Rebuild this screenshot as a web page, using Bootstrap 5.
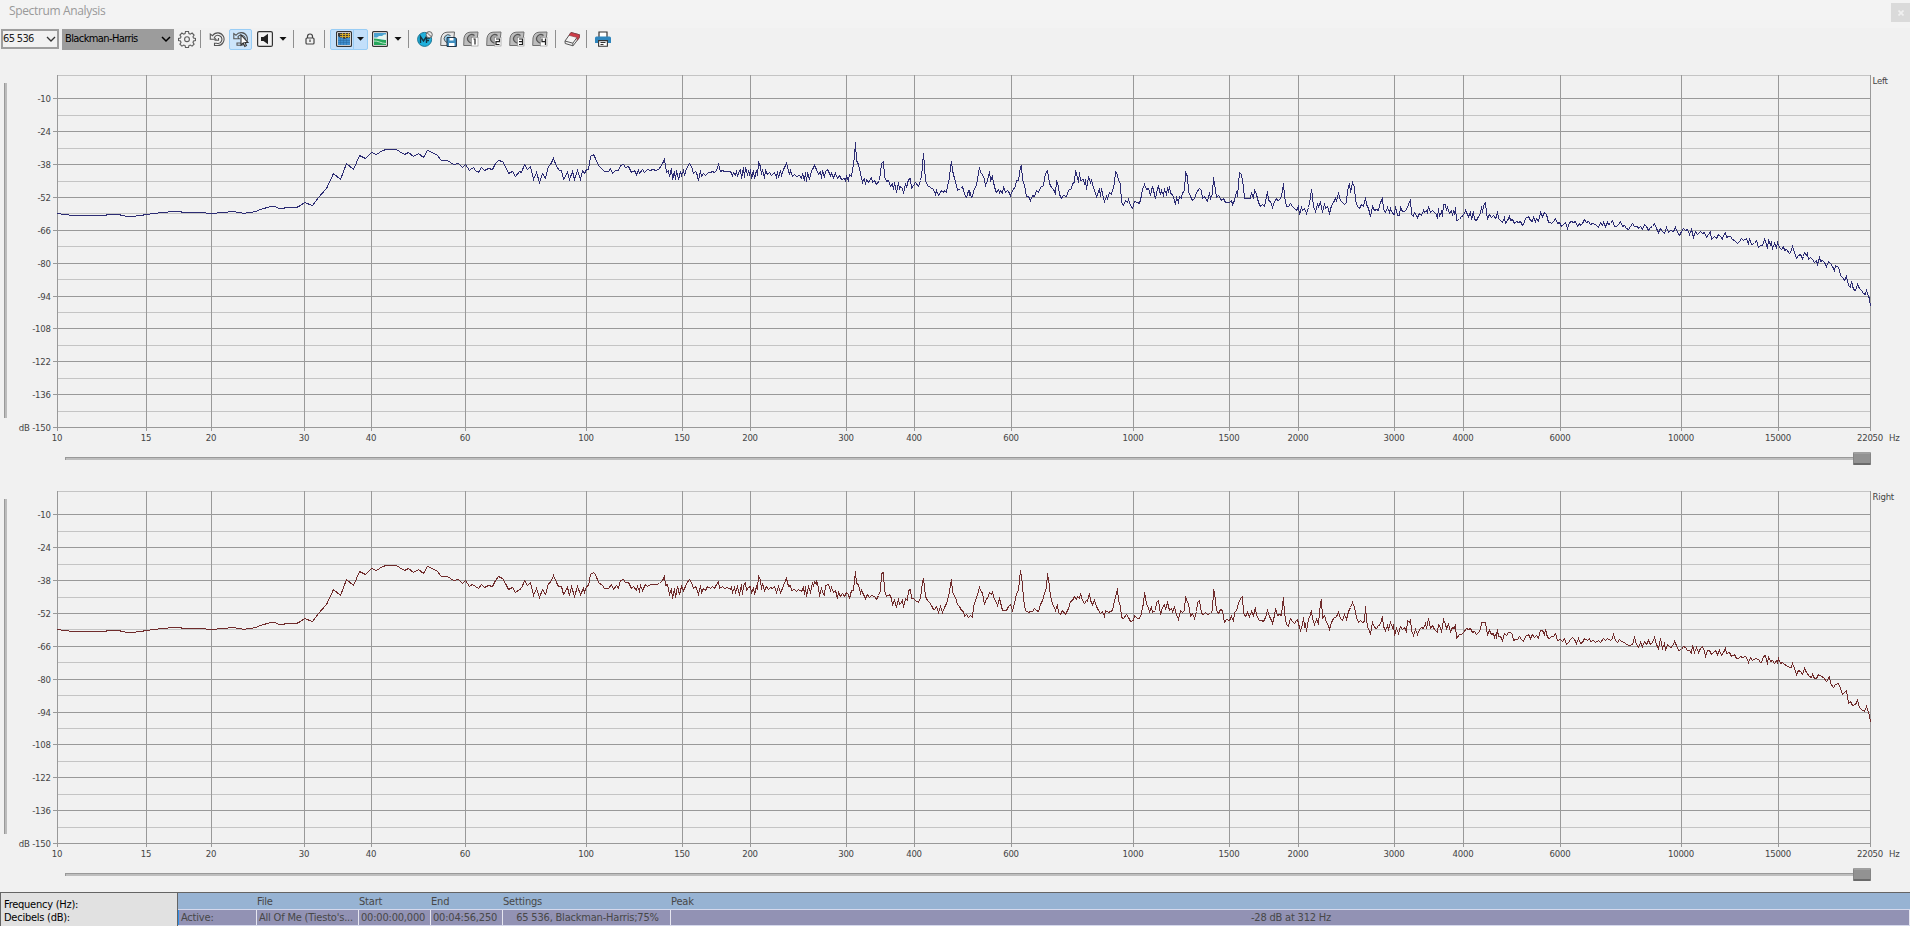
<!DOCTYPE html>
<html lang="en">
<head>
    <meta charset="UTF-8">
    <meta name="viewport" content="width=device-width, initial-scale=1">
    <title>Spectrum Analysis</title>
    <link href="https://cdn.jsdelivr.net/npm/bootstrap@5.3.0/dist/css/bootstrap.min.css" rel="stylesheet">
    <style>
        body {
            background-color: #f1f1f1;
            font-family: "DejaVu Sans Condensed", "DejaVu Sans", sans-serif;
            font-size: 11px;
            line-height: 14px;
            color: #222;
            height: 926px;
            overflow: hidden;
        }
        .titlebar {
            height: 28px;
            background-color: #f3f3f3;
            font-family: "Open Sans", sans-serif;
            font-size: 12px;
            color: #999;
            padding-left: 9px;
        }
        .title-text {
            line-height: 22px;
            letter-spacing: -0.35px;
        }
        .close-box {
            width: 19px;
            height: 19px;
            margin-top: 3px;
            background-color: #dadada;
        }
        .toolbar {
            height: 22px;
            padding-left: 1px;
        }
        .toolbar svg {
            flex: none;
            display: block;
        }
        .combo-size {
            width: 58px;
            height: 20px;
            border: 2px solid #9e9e9e;
            padding: 0 1px 0 0;
            letter-spacing: -0.65px;
            margin-right: 3px;
        }
        .combo-window {
            width: 112px;
            height: 21px;
            background-color: #9c9c9c;
            padding: 0 3px;
            color: #000;
            letter-spacing: -0.6px;
            margin-right: 4px;
        }
        .tool-sep {
            width: 1px;
            height: 18px;
            background-color: #8f8f8f;
        }
        .sep-gear { margin: 0 8px 0 4px; }
        .sep-speaker { margin: 0 10px 0 0; }
        .sep-lock { margin: 0 5px 0 8px; }
        .sep-view { margin: 0 8px 0 0; }
        .sep-slots { margin: 0 8px 0 6px; }
        .sep-eraser { margin: 0 8px 0 5px; }
        .tool-on {
            height: 21px;
            background-color: #cce5fb;
            border: 1px solid #99cdf5;
            border-radius: 2px;
        }
        .tool-pointer {
            width: 23px;
            margin: 0 4px 0 4px;
        }
        .tool-split {
            width: 38px;
            padding-left: 5px;
            background-color: #c2dffa;
        }
        .split-line {
            width: 1px;
            height: 19px;
            background-color: #99cdf5;
            margin-left: 1px;
        }
        .icon-second { margin-left: 4px; }
        .icon-slot { margin-left: 6px; }
        .icon-save { margin-left: 7px; }
        .channel {
            height: 416px;
        }
        .v-rail {
            width: 3px;
            height: 335px;
            margin: 33px 0 0 4px;
            background-color: #bcbcbc;
            border-left: 1px solid #999;
        }
        .h-row {
            height: 16px;
            padding-left: 65px;
        }
        .h-rail {
            width: 1788px;
            height: 3px;
            margin-top: 7px;
            background-color: #bebebe;
            border-top: 1px solid #999;
            border-left: 1px solid #999;
        }
        .h-thumb {
            width: 18px;
            height: 13px;
            margin-top: 2px;
            background-color: #929292;
            border: 1px solid #848484;
            border-top: 2px solid #a0a0a0;
            border-bottom: 2px solid #6a6a6a;
            border-radius: 1px;
        }
        .axis-label {
            font-size: 9.5px;
            fill: #444;
            letter-spacing: -0.2px;
        }
        .status {
            height: 34px;
            margin-top: 10px;
            border-top: 1px solid #646464;
        }
        .readout {
            width: 178px;
            background-color: #e1e1e1;
            border-left: 1px solid #646464;
            border-right: 1px solid #646464;
            color: #000;
            line-height: 13px;
            padding: 5px 0 0 3px;
            letter-spacing: -0.25px;
        }
        .info-grid {
            display: grid;
            grid-template-columns: 79px 102px 72px 72px 168px 1fr;
            grid-template-rows: 16px 16px;
            background-color: #d6d9ec;
            color: #474747;
            letter-spacing: -0.2px;
            white-space: nowrap;
        }
        .info-head {
            background-color: #97b3d3;
            line-height: 18px;
            height: 16px;
        }
        .info-cell {
            background-color: #9292b4;
            line-height: 16px;
            height: 15px;
            margin-top: 1px;
            border-right: 1px solid #e6e6f0;
            padding-left: 2px;
            overflow: hidden;
        }
        .info-cell.first {
            border-left: 1px solid #2f8fe8;
        }
    </style>
</head>
<body>

    <div class="titlebar d-flex justify-content-between">
        <div class="title-text">Spectrum Analysis</div>
        <div class="close-box d-flex align-items-center justify-content-center">
            <svg width="6" height="6" viewBox="0 0 6 6"><path d="M.5.5l5 5M5.500.5l-5 5" stroke="#f0f0f0" stroke-width="1.700"/></svg>
        </div>
    </div>

    <div class="toolbar d-flex align-items-center">
        <div class="combo-size d-flex align-items-center justify-content-between">
            <span>65 536</span>
            <svg width="10" height="8" viewBox="0 0 10 8"><path d="M1 2l4 4 4-4" fill="none" stroke="#333" stroke-width="1.300"/></svg>
        </div>
        <div class="combo-window d-flex align-items-center justify-content-between">
            <span>Blackman-Harris</span>
            <svg width="10" height="8" viewBox="0 0 10 8"><path d="M1 2l4 4 4-4" fill="none" stroke="#000" stroke-width="1.500"/></svg>
        </div>

        <!-- Settings gear -->
        <svg width="18" height="18" viewBox="0 0 18 18" fill="none" stroke="#5c5c5c" stroke-width="1.100">
            <path d="M7.500 1.500h3l.4 2 1.400.6 1.800-1.100 2 2-1.100 1.800.5 1.300 2 .4v2l-2 .500-.5 1.400 1.100 1.700-2 2-1.800-1.100-1.400.6-.4 1.900h-3l-.4-1.900-1.400-.6-1.800 1.100-2-2L3 12.400 2.500 11l-2-.5v-2l2-.4L3 6.800 1.900 5l2-2 1.800 1.100 1.400-.6z"/>
            <circle cx="9" cy="9.200" r="2.400"/>
        </svg>
        <div class="tool-sep sep-gear"></div>

        <!-- Refresh, refresh at pointer -->
        <svg width="16" height="16" viewBox="0 0 16 16" fill="none" stroke="#555" stroke-width="1.100">
            <path d="M1.300 3v5.200h5.500L5.300 6.500A4 4 0 1 1 7.500 12.200H5.500v2.300h3A6.300 6.300 0 1 0 3.500 4.700z"/>
            <path d="M5.500 9.300h4V7"/>
        </svg>
        <div class="tool-on tool-pointer d-flex align-items-center justify-content-center">
            <svg width="18" height="18" viewBox="0 0 18 18" fill="none" stroke="#555" stroke-width="1.100">
                <path d="M1.800 3.500v5.200h5.500L5.800 7A4 4 0 1 1 8 13H5v2.200h4A6.300 6.300 0 1 0 4 5.200z"/>
                <path d="M9 5v10l2.300-2 1.500 3.400 1.600-.8-1.500-3.100h3z" fill="#fff" stroke="#333"/>
            </svg>
        </div>

        <!-- Speaker -->
        <svg width="17" height="16" viewBox="-1 0 17 16">
            <rect x=".6" y=".6" width="14.800" height="14.800" rx="1.500" fill="#f3f3f3" stroke="#333" stroke-width="1.200"/>
            <path d="M4 6h2.500L11 2.700v10.600L6.500 10H4z" fill="#222"/>
        </svg>
        <svg class="mx-1" width="12" height="6" viewBox="0 0 12 6"><path d="M2.500 1h7L6 4.800z" fill="#111"/></svg>
        <div class="tool-sep sep-speaker"></div>

        <!-- Lock -->
        <svg width="12" height="12" viewBox="0 0 12 12" fill="none" stroke="#444" stroke-width="1.200">
            <rect x="2" y="5" width="8" height="6" rx="1"/>
            <path d="M3.500 5V3.500a2.500 2.500 0 0 1 5 0V5M6 6.500v2.500"/>
        </svg>
        <div class="tool-sep sep-lock"></div>

        <!-- Spectrum view, split button -->
        <div class="tool-on tool-split d-flex align-items-center">
            <svg width="16" height="16" viewBox="0 0 16 16">
                <rect x=".6" y=".6" width="14.800" height="14.800" rx="1" fill="#fff" stroke="#333" stroke-width="1.200"/>
                <rect x="2" y="2" width="12" height="12" fill="#3a3a3a"/>
                <path d="M4 3.500h10M4 5.500h10M6.500 2v5M9.500 2v5M12.500 2v5" stroke="#d8ae25" stroke-width=".9"/>
                <path d="M2 5l2 1.500h2L8 8l3-1 3-.5V14H2z" fill="#3f8fcf"/>
                <path d="M2 9.500h12M2 11.500h12M4.500 7v7M7.500 8v6M10.500 8v6" stroke="#2a69a0" stroke-width=".5"/>
            </svg>
            <div class="split-line"></div>
            <svg width="13" height="6" viewBox="0 0 13 6"><path d="M3 1h7L6.500 4.800z" fill="#111"/></svg>
        </div>
        <svg class="icon-second" width="16" height="16" viewBox="0 0 16 16">
            <rect x=".6" y=".6" width="14.800" height="14.800" rx="1" fill="#fff" stroke="#333" stroke-width="1.200"/>
            <rect x="2" y="2" width="12" height="12" fill="#4ba3d1"/>
            <path d="M2 6.500h3L7 5h3l2-1.500h2V9L2 8z" fill="#e7f6ef"/>
            <path d="M2 7.500c5 0 7 2 12 1.500v5H2z" fill="#26a65b"/>
            <path d="M2 10c4-.5 7 2.500 12 2.500" fill="none" stroke="#b8e7c6"/>
        </svg>
        <svg class="mx-1" width="12" height="6" viewBox="0 0 12 6"><path d="M2.500 1h7L6 4.800z" fill="#111"/></svg>
        <div class="tool-sep sep-view"></div>

        <!-- Memory slots -->
        <svg width="16" height="16" viewBox="0 0 16 16">
            <circle cx="7.600" cy="8.400" r="7" fill="#1fb0dc" stroke="#1b7594"/>
            <path d="M3.500 12V5.500L6.500 10l3-4.500V12M9.500 7h3.500M9.500 9.500h2.500" fill="none" stroke="#143746" stroke-width="1.400"/>
            <circle cx="12.200" cy="3.700" r="3.100" fill="#e8e8e8" stroke="#666"/><path d="M10 1.700l4.300 4" stroke="#666"/>
        </svg>
        <svg class="icon-save" width="17" height="16" viewBox="0 0 17 16">
            <path d="M.7 14.500L1 7Q2 1.500 7 1.200L14.500 1l-1 9Q12 14.500 7 14.500z" fill="#e6e6e6" stroke="#666"/>
            <path d="M10.500 4.500a4 4 0 1 0 0 6.500" fill="#9fd3ee" stroke="#555"/>
            <path d="M7 6.500h8l1.400 1v8H7z" fill="#3f8fc0" stroke="#234"/><path d="M9.500 7h4v2.500h-4zM9 12h5.500v3H9z" fill="#fff"/>
        </svg>
        <div id="slots" class="d-flex"></div>
        <div class="tool-sep sep-slots"></div>

        <!-- Eraser -->
        <svg width="17" height="16" viewBox="0 0 17 16" stroke="#555" stroke-linejoin="round">
            <path d="M1 10L7 1.500l8.500 2.300-.3 3L9 14.800 1.200 12.500z" fill="#f4f4f4"/>
            <path d="M5 4.300L7 1.500l8.500 2.300-.3 3-2 2.500-.5-3z" fill="#d13c48" stroke="#8c3a42" stroke-width=".7"/>
            <path d="M1 10l7.800 2.200.2 2.600M8.800 12.200l4.200-5.700" fill="none"/>
        </svg>
        <div class="tool-sep sep-eraser"></div>

        <!-- Printer -->
        <svg width="16" height="16" viewBox="0 0 16 16">
            <path d="M4 6V1h8v5" fill="#fff" stroke="#333" stroke-width="1.200"/>
            <path d="M1.500 5.500h13Q16 5.500 16 7v5h-3V9.500H3V12H0V7q0-1.500 1.500-1.500z" fill="#2f86bd"/>
            <path d="M3.600 9.600h8.800v5.700H3.600zM5.500 11.500h5M5.500 13.500h3" fill="#fff" stroke="#333" stroke-width="1.100"/>
        </svg>
    </div>

    <div class="channel">
        <div class="d-flex align-items-start">
            <div class="v-rail"></div>
            <svg id="chart-left" width="1903" height="400" viewBox="7 50 1903 400"></svg>
        </div>
        <div class="h-row d-flex">
            <div class="h-rail"></div>
            <div class="h-thumb"></div>
        </div>
    </div>

    <div class="channel">
        <div class="d-flex align-items-start">
            <div class="v-rail"></div>
            <svg id="chart-right" width="1903" height="400" viewBox="7 466 1903 400"></svg>
        </div>
        <div class="h-row d-flex">
            <div class="h-rail"></div>
            <div class="h-thumb"></div>
        </div>
    </div>

    <div class="status d-flex">
        <div class="readout">Frequency (Hz):<br>Decibels (dB):</div>
        <div class="info-grid flex-grow-1">
            <div class="info-head"></div>
            <div class="info-head">File</div>
            <div class="info-head">Start</div>
            <div class="info-head">End</div>
            <div class="info-head">Settings</div>
            <div class="info-head">Peak</div>
            <div class="info-cell first">Active:</div>
            <div class="info-cell">All Of Me (Tiesto's...</div>
            <div class="info-cell">00:00:00,000</div>
            <div class="info-cell">00:04:56,250</div>
            <div class="info-cell text-center">65 536, Blackman-Harris;75%</div>
            <div class="info-cell text-center">-28 dB at 312 Hz</div>
        </div>
    </div>

    <script>
        // Vertical gridlines: [frequency, x]
        const freqs = [[10, 57], [15, 146], [20, 211], [30, 304], [40, 371], [60, 465], [100, 586], [150, 682],
            [200, 750], [300, 846], [400, 914], [600, 1011], [1000, 1133], [1500, 1229], [2000, 1298],
            [3000, 1394], [4000, 1463], [6000, 1560], [10000, 1681], [15000, 1778], [22050, 1870]];
        // Horizontal gridlines of the left channel
        const major = [98, 131, 164, 197, 230, 263, 296, 328, 361, 394, 427];
        const minor = [75, 115, 148, 181, 213, 246, 279, 312, 345, 378, 411];

        // Curves are stored in pieces: origin x, origin y, then points in thirds of a pixel
        const low = "172 430 190 433 220 436 315 436 322 433 358 433 365 436 385 439 405 439 410 436 428 436 432 433 448 433 452 430 472 430 476 427 502 427 506 424 542 424 546 427 616 427 620 430 648 430 653 427 682 427 686 424 706 424 710 427 724 427 728 430 736 430 740 427 752 427 765 424 782 417 812 409 822 409 838 415 848 415 858 412 890 412 900 405 914 397 936 406 956 381 978 356 1000 311 1022 328 1040 281 1060 298 1078 256 1096 265 1114 246 1128 254 1148 241 1158 238 1188 238 1198 243 1212 254 1224 247 1240 259 1255 250 1271 262 1282 241 1308 253 1325 271 1343 271 1360 283 1374 280 1388 292 1396 284 1408 301";
        const leftCurve = [
            [0, 70, low],
            [470, 130, "0 119 10 112 16 120 24 127 34 113 43 121 54 115 66 117 76 101 86 91 98 95 106 110 115 129 127 124 137 138 147 124 155 126 163 103 171 117 181 110 190 148 200 126 209 156 218 130 227 145 234 110 242 104 250 86 260 110 268 122 274 120 281 147 291 126 299 147 307 124 314 148 323 122 330 147 338 122 342 131 350 118 356 118 361 80 370 73 377 86 384 106 396 119 404 125 416 125 421 115 428 131 436 122 444 120 450 106 460 103 466 111 475 108 485 126 492 122 498 133 504 120 508 130 516 118 524 127 532 117 540 122 548 118 558 122 568 116 576 100 583 88 588 126 594 120 599 139 603 116 608 148 612 125 616 147 620 122 625 147 630 124 635 136 640 122 644 136 650 116 658 100 665 108 670 130 675 124 680 128 686 150 691 122 695 138 700 130 706 136 714 126 720 128 727 124 733 128 738 120 745 102 750 124 758 120 764 125 782 124 787 136 791 127 795 137 799 120 803 139 807 122 810 117 814 146 819 112 822 143 827 113 831 132 835 125 838 134 841 118 845 145 849 120 853 146 858 120 862 136 866 98 870 110 873 132 878 118 882 144 887 120 892 133 898 126 904 135 912 128 918 142 922 125 926 143 931 120 935 136 940 118 944 112 949 100 954 120 958 134 962 122 967 139 972 132 980 138 988 135 993 144 998 130 1002 150 1005 128 1009 153 1013 128 1018 148 1023 120 1028 118 1034 106 1040 118 1045 134 1050 124 1054 146 1058 122 1062 143 1067 124 1073 118 1080 136 1085 130 1091 142 1096 130 1102 144 1108 136 1114 148 1122 144 1126 152 1130 140 1134 150 1139 132 1144 140 1149 100 1153 78 1156 38 1160 92 1166 104 1170 130 1176 156 1180 148 1183 144 1186 162 1190 148 1195 158 1203 142 1208 156 1214 152 1220 163 1228 150 1233 100 1240 95 1244 140 1250 154 1256 150 1261 168 1266 160 1269 178 1274 156 1279 186 1284 158 1288 176 1292 170 1296 174 1301 190 1306 160 1310 172 1316 148 1321 144 1325 174 1330 166 1337 156 1346 168 1350 150 1354 140 1360 70 1365 150 1372 166 1380 173 1390 178 1396 194 1400 180 1405 195"],
            [940, 130, "0 188 5 181 9 188 14 181 18 186 22 170 27 142 31 108 34 95 38 122 43 145 48 165 53 182 60 176 66 170 71 180 76 200 80 201 84 182 87 196 88 180 93 203 98 198 104 175 110 165 114 128 118 112 122 126 128 132 132 148 137 166 142 150 148 125 152 150 156 140 161 158 165 180 168 186 174 178 178 188 182 180 187 190 191 170 196 188 201 182 206 184 212 196 217 180 225 168 230 152 235 150 240 108 244 106 248 148 253 165 258 200 264 198 271 210 276 196 284 198 290 182 295 186 300 172 310 166 316 130 323 122 328 160 335 172 340 178 346 190 350 150 354 170 358 192 364 204 370 196 378 198 384 180 394 174 398 160 402 158 406 122 411 142 414 156 418 128 422 150 430 148 434 162 437 148 440 178 445 140 450 158 454 152 460 172 464 180 468 200 473 192 477 176 481 198 485 176 489 205 493 214 498 198 503 206 508 188 513 192 518 182 522 160 526 124 530 126 535 148 540 164 543 216 549 226 556 210 562 218 566 208 570 226 576 236 583 214 592 216 598 220 604 196 607 178 612 162 618 178 624 175 630 196 634 180 638 170 642 192 647 206 651 176 656 170 660 194 665 182 670 196 674 178 680 192 683 172 686 188 688 168 692 190 698 194 702 212 706 224 710 202 714 216 718 200 723 206 727 188 733 184 737 128 741 140 744 185 750 200 757 212 764 204 770 188 778 176 783 180 787 206 793 198 797 204 802 215 808 186 812 204 817 190 821 142 825 180 828 202 834 195 840 206 845 212 850 205 856 216 868 217 873 212 877 224 883 210 889 184 893 200 898 128 904 134 909 170 914 205 930 205 935 186 939 206 944 178 949 192 954 218 960 228 967 224 974 230 978 200 981 184 986 212 991 214 996 232 1003 214 1008 206 1012 212 1022 208 1026 184 1030 160 1034 200 1040 228 1045 230 1050 220 1056 228 1062 236 1068 240 1074 228 1079 254 1084 232 1088 242 1092 234 1098 250 1104 232 1109 220 1114 178 1118 200 1121 230 1126 244 1132 222 1136 230 1142 216 1147 248 1152 220 1157 234 1163 228 1168 250 1174 226 1180 218 1185 206 1190 210 1196 190 1201 210 1206 216 1212 222 1218 218 1223 180 1227 160 1231 188 1237 156 1242 172 1247 210 1252 228 1258 234 1264 222 1270 230 1276 202 1280 224 1284 234 1288 248 1291 260 1296 230 1302 242 1308 238 1314 240 1320 218 1327 204 1331 238 1336 248 1342 232 1347 248 1352 234 1357 250 1362 254 1366 230 1371 256 1377 256 1382 232 1388 244 1394 244 1400 238 1406 222"],
            [1410, 60, "0 418 4 462 10 470 14 456 22 472 28 460 34 466 40 452 44 458 48 450 52 456 55 440 60 458 66 450 72 458 78 462 82 474 86 444 89 470 93 454 97 470 101 434 106 434 110 452 113 442 118 460 123 452 126 466 130 450 134 462 137 442 140 482 148 478 154 468 160 466 166 452 170 456 174 470 180 458 185 478 190 455 194 478 198 480 204 468 210 460 214 440 218 456 221 436 226 428 230 460 233 476 238 462 244 472 250 466 255 474 260 470 262 454 266 474 270 480 276 486 282 472 287 490 292 482 297 470 302 480 307 478 312 490 318 484 324 488 330 484 336 496 342 486 347 476 354 470 360 480 366 484 371 472 376 484 380 476 386 484 391 458 396 470 403 458 408 464 414 488 420 486 425 490 431 484 437 474 442 490 448 488 454 498 460 492 466 486 472 504 478 488 485 484 490 488 496 484 502 500 507 490 512 496 518 490 522 478 528 488 534 484 540 494 548 490 556 494 564 502 571 488 576 496 581 486 586 500 591 486 596 494 602 490 608 482 613 498 620 500 626 492 631 484 637 498 643 496 650 504 656 508 662 498 668 490 674 500 681 498 686 504 692 498 698 508 703 494 708 500 714 512 720 502 726 500 732 490 738 504 745 516 751 504 758 514 764 520 769 502 775 516 782 510 790 514 796 502 802 516 807 526 812 520 819 504 826 512 832 508 838 524 844 508 850 532 856 514 863 524 870 514 877 520 883 516 888 532 894 524 900 514 905 538 912 528 918 534 925 522 931 528 936 538 941 526 945 518 950 532 956 528 962 530 968 538 974 542 981 550 987 544 993 534 1000 542 1008 536 1014 554 1018 536 1024 552 1032 550 1040 542 1046 562 1052 556 1058 556 1062 538 1067 544 1072 564 1076 542 1080 554 1084 546 1088 564 1093 550 1098 562 1103 546 1108 562 1114 568 1120 558 1124 570 1130 568 1137 580 1143 572 1147 560 1152 578 1160 594 1166 586 1172 582 1176 594 1180 588 1184 576 1188 586 1192 580 1196 598 1202 592 1208 598 1214 606 1218 600 1222 612 1227 592 1232 604 1238 600 1244 606 1249 620 1254 604 1260 610 1266 618 1272 630 1277 616 1284 622 1288 632 1292 646 1298 652 1304 662 1308 648 1314 676 1320 682 1324 664 1329 688 1336 690 1342 674 1348 686 1354 692 1360 700 1366 704 1369 692 1374 708 1378 714 1380 738"]
        ];
        const rightCurve = [
            [0, 486, low],
            [470, 550, "0 106 8 102 16 110 24 116 34 103 43 113 54 106 66 108 76 90 86 79 98 86 106 100 115 118 127 112 137 127 147 117 155 115 163 92 171 105 181 97 190 136 200 116 209 142 218 118 227 134 234 99 242 96 250 76 258 96 266 110 274 108 281 133 291 112 299 136 305 110 313 138 322 110 332 134 340 114 344 126 350 110 356 106 361 74 370 67 377 72 384 96 396 106 404 115 416 115 423 103 429 117 438 106 444 114 450 92 460 88 466 97 475 97 485 114 490 108 498 121 502 108 507 123 512 105 517 121 525 104 532 110 540 104 550 102 558 104 568 100 576 92 583 80 587 106 592 104 598 133 603 116 607 146 613 115 617 142 623 110 627 133 633 108 640 122 645 110 650 100 658 88 664 98 669 115 675 108 680 116 686 132 690 106 694 126 700 114 706 120 712 110 720 116 728 110 734 114 740 102 745 94 749 114 756 110 764 116 772 111 780 118 784 112 788 128 793 112 797 128 801 108 805 124 809 134 813 104 817 133 821 106 826 98 830 120 836 112 840 108 845 130 850 112 854 134 858 108 862 114 866 76 870 90 873 118 878 100 882 121 888 110 894 118 900 112 908 114 914 108 920 128 926 110 930 126 936 114 941 106 945 90 950 86 956 110 962 106 965 122 972 118 978 124 986 118 994 124 999 112 1003 132 1006 110 1010 138 1015 108 1020 126 1026 98 1030 108 1034 94 1038 104 1040 92 1045 112 1049 140 1053 112 1058 126 1062 135 1067 106 1074 102 1080 120 1085 112 1091 128 1096 120 1101 144 1106 126 1112 138 1118 130 1124 140 1128 128 1134 134 1139 146 1143 120 1149 122 1153 92 1156 64 1160 100 1166 104 1170 130 1174 120 1180 132 1187 144 1192 132 1198 142 1204 136 1212 140 1219 148 1226 136 1231 120 1234 70 1240 68 1244 120 1250 138 1258 134 1263 146 1267 164 1272 150 1279 172 1284 146 1288 164 1294 156 1297 152 1301 172 1306 144 1311 152 1314 122 1320 118 1324 144 1330 146 1337 150 1345 158 1352 142 1357 96 1361 84 1366 140 1372 150 1378 158 1384 166 1390 178 1394 178 1399 170 1405 188"],
            [940, 550, "0 168 8 188 14 172 20 160 26 140 30 106 34 88 38 124 42 140 47 142 52 164 58 170 64 180 70 184 74 200 78 192 84 202 90 196 97 203 101 168 106 150 112 132 118 112 123 128 128 128 134 162 138 146 143 146 148 128 153 134 158 128 162 148 168 156 173 166 179 146 184 170 188 180 200 180 206 168 212 162 217 182 223 160 229 130 235 120 241 62 246 102 251 144 256 180 264 186 272 184 278 184 284 174 290 182 295 184 300 162 306 150 312 130 318 112 323 70 327 108 331 138 338 160 345 180 351 164 356 186 361 192 368 182 376 192 384 174 390 154 398 150 403 140 408 148 412 138 418 146 421 130 426 150 432 160 438 150 443 154 447 130 452 150 457 164 462 152 468 170 474 182 480 190 486 184 492 198 497 180 504 186 510 184 518 180 523 152 528 130 531 116 535 152 540 168 544 202 550 204 558 192 565 202 572 214 580 212 584 196 592 204 598 204 603 190 607 168 610 162 613 128 618 160 624 176 629 184 633 172 638 186 645 180 650 158 655 152 660 194 666 172 672 162 677 178 682 158 687 180 693 174 698 184 704 172 710 192 715 208 722 180 728 188 733 180 737 138 741 158 745 160 750 198 756 190 762 206 768 184 773 156 779 150 784 190 790 194 796 186 803 194 810 190 816 180 820 122 824 128 828 180 834 190 840 178 848 182 854 216 860 208 868 210 874 200 879 214 884 186 890 182 895 160 900 146 907 140 911 190 916 200 922 186 928 198 934 184 939 196 945 172 950 196 957 212 964 210 970 214 976 202 982 180 987 198 993 212 998 220 1004 196 1006 176 1012 196 1017 192 1023 196 1027 166 1030 142 1034 190 1039 222 1044 228 1050 206 1057 214 1063 220 1068 210 1073 208 1077 232 1082 240 1087 222 1090 202 1094 228 1097 222 1100 244 1104 206 1109 202 1114 180 1118 204 1123 224 1130 208 1136 220 1141 156 1144 148 1147 206 1153 196 1158 216 1164 226 1169 238 1175 218 1180 204 1188 198 1195 188 1200 206 1207 212 1213 194 1219 208 1224 184 1230 172 1237 158 1242 172 1248 202 1255 218 1262 210 1267 218 1272 214 1276 168 1279 206 1283 232 1287 240 1291 254 1297 216 1303 232 1309 234 1314 226 1320 222 1326 198 1331 230 1336 240 1341 226 1345 238 1351 218 1356 232 1361 224 1364 256 1369 236 1374 250 1380 228 1386 238 1392 232 1398 244 1403 210 1408 216"],
            [1410, 600, "0 58 4 92 9 106 15 88 21 102 28 88 34 82 40 84 46 70 49 84 54 56 60 84 66 76 72 88 77 90 82 96 86 74 90 82 94 96 100 58 106 74 110 86 115 74 120 94 126 82 132 84 136 74 140 114 148 102 155 104 160 96 168 84 174 88 180 86 186 98 192 94 198 102 204 96 210 88 214 66 220 68 227 68 232 102 238 92 244 102 250 100 254 112 258 98 260 116 262 88 266 110 272 108 278 120 283 100 290 106 295 96 300 98 306 102 310 120 316 118 322 118 328 108 333 118 339 124 346 110 354 104 360 116 367 104 373 112 380 106 386 114 392 92 398 90 403 102 406 88 412 112 419 116 425 110 431 108 436 100 442 120 450 118 458 124 463 116 468 132 474 128 480 118 488 112 494 118 500 130 505 114 511 130 518 126 524 114 532 120 537 116 542 124 550 120 556 128 564 122 572 126 580 116 586 122 592 116 600 120 606 116 611 104 615 122 622 128 629 118 635 124 642 126 650 134 658 136 666 132 673 112 678 132 686 142 692 128 698 138 704 124 710 134 716 122 720 134 727 128 733 112 738 134 744 146 751 116 756 144 762 130 767 152 773 132 780 142 788 138 793 124 799 136 806 150 813 148 820 138 826 142 832 150 838 150 843 160 847 136 852 156 858 142 864 156 870 144 877 140 883 154 887 168 893 150 898 150 904 164 910 158 917 152 922 162 928 150 935 166 941 156 946 146 950 160 957 156 964 168 972 164 978 176 985 174 992 170 998 172 1005 168 1010 172 1016 186 1022 172 1028 182 1036 174 1044 178 1050 186 1055 186 1061 170 1067 166 1072 192 1076 168 1080 184 1088 182 1094 190 1098 180 1103 186 1106 176 1111 190 1117 188 1124 192 1130 196 1137 202 1143 202 1147 190 1152 206 1160 222 1166 210 1172 214 1176 222 1183 204 1190 216 1197 228 1203 232 1208 224 1214 236 1220 234 1226 224 1234 228 1241 232 1248 244 1257 230 1262 250 1270 262 1276 252 1284 250 1290 264 1297 282 1304 278 1309 270 1314 310 1321 304 1328 316 1336 314 1342 300 1347 322 1354 328 1362 334 1369 320 1374 336 1378 346 1381 368"]
        ];

        function label(x, y, anchor, text) {
            return `<text class="axis-label" x="${x}" y="${y}" text-anchor="${anchor}">${text}</text>`;
        }

        function drawChart(id, dy, name, color, curve) {
            let light = "", dark = "", out = "";
            minor.forEach(y => light += `M57 ${y + dy + 0.5}H1870`);
            major.forEach((y, i) => {
                dark += `M53 ${y + dy + 0.5}H1871`;
                const db = -10 - 14 * i;
                out += label(50.8, y + dy + 4, "end", (db === -150 ? "dB " : "") + db);
            });
            freqs.forEach(([f, x]) => {
                dark += `M${x + 0.5} ${75 + dy}V${431 + dy}`;
                out += label(x, 441 + dy, "middle", f);
            });
            const pts = [];
            curve.forEach(([ox, oy, data]) => {
                const n = data.split(" ").map(Number);
                for (let i = 0; i < n.length; i += 2) {
                    pts.push((ox + Math.floor(n[i] / 3) + 0.5) + "," + (oy + Math.floor(n[i + 1] / 3) + 0.5));
                }
            });
            out += label(1872.5, 84 + dy, "start", name) + label(1889, 441 + dy, "start", "Hz");
            document.getElementById(id).innerHTML =
                `<g fill="none" shape-rendering="crispEdges"><path d="${light}" stroke="#c4c4c4"/><path d="${dark}" stroke="#999"/>` +
                `<polyline points="${pts.join(" ")}" stroke="${color}"/></g>` + out;
        }

        drawChart("chart-left", 0, "Left", "#2d2d74", leftCurve);
        drawChart("chart-right", 416, "Right", "#702c2c", rightCurve);

        // Numbered memory buttons
        const digits = { 1: "M10.500 8h1.500v5.500", 2: "M10 8h3.500v2.700H10v2.800h3.500", 3: "M10 8h3.500v5.500H10M10 10.700h3.500", 4: "M10 7.500v3.200h3.500M13.500 7.500v6.500" };
        let slots = "";
        for (const n in digits) {
            slots += `<svg class="icon-slot" width="17" height="16" viewBox="0 0 17 16">
                <path d="M.7 14.500L1 7Q2 1.500 7 1.200L15 1l-1 9Q12 14.500 7 14.500z" fill="#bdbdbd" stroke="#707070"/>
                <path d="M11.500 4.500a4.200 4.200 0 1 0 0 6.500" fill="#a5a5a5" stroke="#555" stroke-width="1.200"/>
                <rect x="8.500" y="6.300" width="6.500" height="8.700" fill="#fff" stroke="#777" stroke-width=".5"/>
                <path d="${digits[n]}" fill="none" stroke="#222" stroke-width="1.200"/></svg>`;
        }
        document.getElementById("slots").innerHTML = slots;
    </script>

    <script src="https://cdn.jsdelivr.net/npm/bootstrap@5.3.0/dist/js/bootstrap.bundle.min.js"></script>
</body>
</html>
